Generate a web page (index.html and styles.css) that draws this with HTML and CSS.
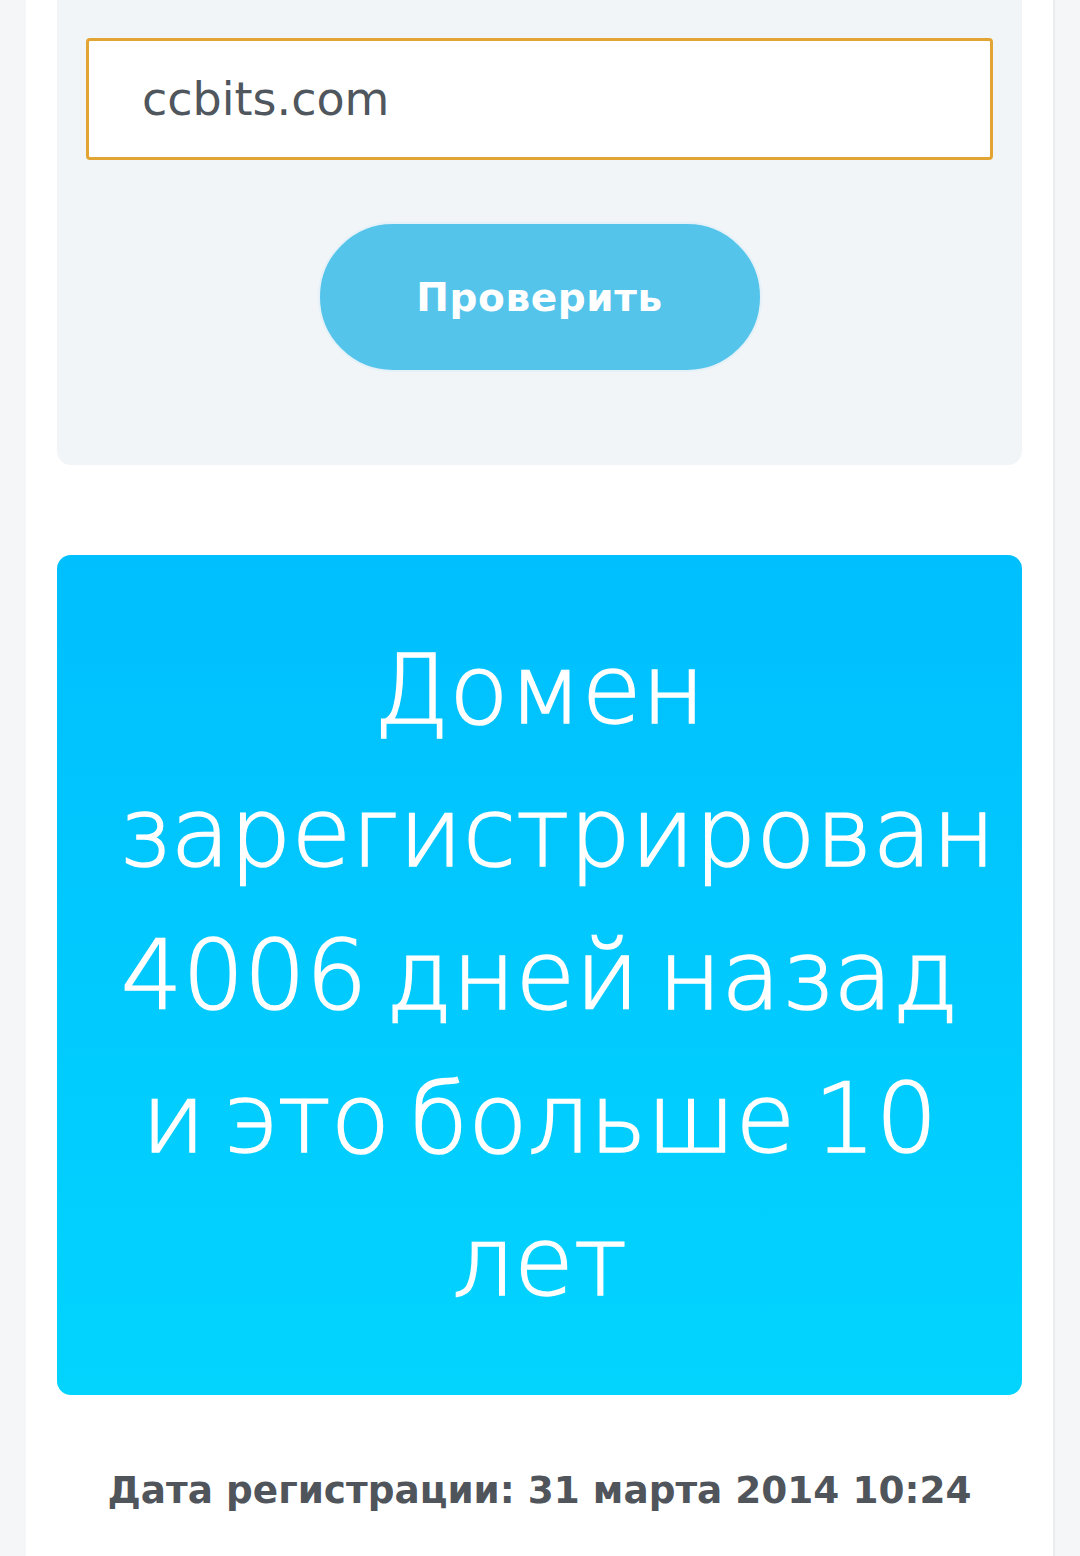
FILE: index.html
```html
<!DOCTYPE html>
<html lang="ru">
<head>
<meta charset="utf-8">
<title>Проверка домена</title>
<link rel="stylesheet" href="styles.css">
</head>
<body>
<div class="page">
  <div class="check-card">
    <div class="field">ccbits.com</div>
    <div class="actions">
      <button class="btn" type="button">Проверить</button>
    </div>
  </div>
  <div class="result">
    <p class="result-text">Домен зарегистрирован 4006 дней назад и это больше 10 лет</p>
  </div>
  <p class="reg-date">Дата регистрации: 31 марта 2014 10:24</p>
</div>
</body>
</html>
```
FILE: styles.css
```css
html, body {
  margin: 0;
  padding: 0;
}
body {
  background: #f5f6f8;
  font-family: "DejaVu Sans", "Noto Sans", sans-serif;
}
.page {
  width: 1029px;
  margin-left: 26px;
  min-height: 1556px;
  background: #ffffff;
  border-right: 2px solid #eaecef;
  box-sizing: border-box;
  padding: 0 31px;
  overflow: hidden;
}
.check-card {
  background: #f2f5f7;
  border-radius: 0 0 14px 14px;
  padding: 38px 29px 93px;
}
.field {
  height: 122px;
  box-sizing: border-box;
  border: 3px solid #e2a534;
  border-radius: 4px;
  background: #ffffff;
  padding-left: 53px;
  display: flex;
  align-items: center;
  font-size: 46px;
  color: #50565d;
}
.actions {
  display: flex;
  justify-content: center;
  margin-top: 62px;
}
.btn {
  width: 444px;
  height: 150px;
  border: 2px solid #e4f1f8;
  border-radius: 75px;
  background: #55c4ea;
  color: #ffffff;
  font-family: "DejaVu Sans", sans-serif;
  font-weight: bold;
  font-size: 39px;
  letter-spacing: 0.6px;
  padding: 0;
}
.result {
  margin-top: 90px;
  height: 840px;
  box-sizing: border-box;
  border-radius: 14px;
  background: linear-gradient(180deg, #00bffe 0%, #02d4fe 100%);
  padding: 63px 61px 0;
}
.result-text {
  margin: 0;
  color: #ffffff;
  font-size: 97px;
  line-height: 143px;
  text-align: center;
  font-weight: 200;
  word-spacing: -12px;
  -webkit-text-stroke: 1.6px #ffffff;
}
.reg-date {
  margin: 73px 0 0;
  text-align: center;
  font-size: 37.4px;
  font-weight: bold;
  color: #50555c;
}
```
